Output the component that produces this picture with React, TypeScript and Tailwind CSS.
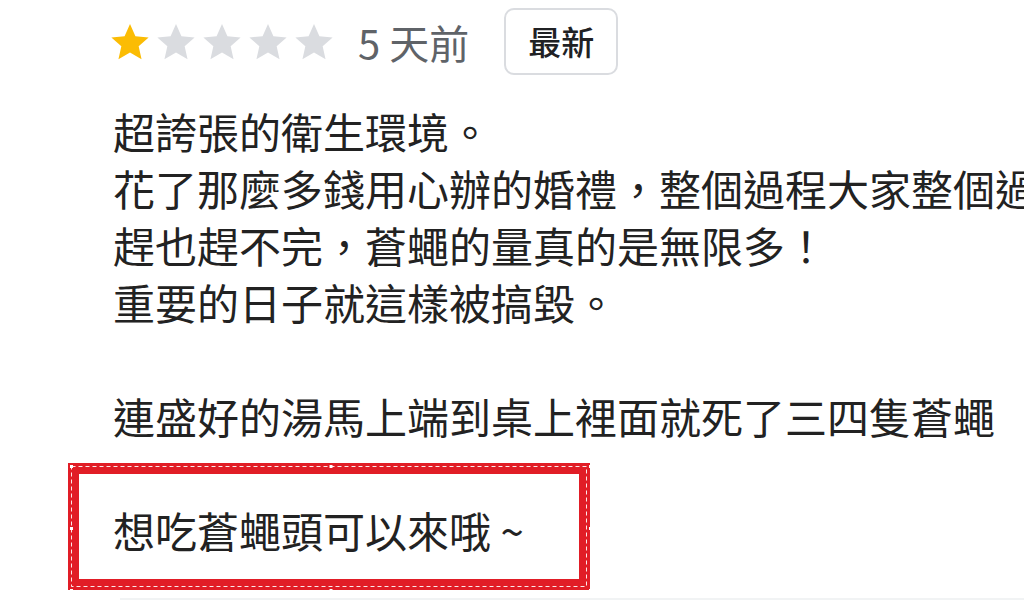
import React from "react";

const Star = ({ color }: { color: string }) => (
  <svg width="44" height="44" viewBox="0 0 24 24" className="block">
    <path
      d="M12 2.2l2.95 6.62 7.2.68-5.43 4.8 1.58 7.07L12 17.7l-6.3 3.67 1.58-7.07L1.85 9.5l7.2-.68z"
      fill={color}
    />
  </svg>
);

const lines = [
  "超誇張的衛生環境。",
  "花了那麼多錢用心辦的婚禮，整個過程大家整個過程都在趕蒼蠅，",
  "趕也趕不完，蒼蠅的量真的是無限多！",
  "重要的日子就這樣被搞毀。",
  "",
  "連盛好的湯馬上端到桌上裡面就死了三四隻蒼蠅",
  "",
  "想吃蒼蠅頭可以來哦 ~",
];

const Handles = () => {
  const pts: [number, number][] = [
    [1.5, 1.5], [261, 1.5], [520.5, 1.5],
    [1.5, 63.5], [520.5, 63.5],
    [1.5, 125.5], [261, 125.5], [520.5, 125.5],
  ];
  return (
    <svg width="522" height="127" className="absolute inset-0 -m-[11px]">
      <rect x="3.5" y="3.5" width="515" height="120" fill="none" stroke="#ffffff" strokeOpacity="0.9" strokeWidth="1" strokeDasharray="4 3" />
      {pts.map(([x, y], i) => (
        <rect key={i} x={x + 0.5} y={y + 0.5} width="3" height="3" fill="#ffffff" />
      ))}
    </svg>
  );
};

export default function App() {
  return (
    <div
      className="relative w-[1024px] h-[600px] overflow-hidden bg-white"
      style={{ fontFamily: '"Noto Sans CJK TC", "Noto Sans", sans-serif' }}
    >
      <div className="flex items-center pt-[8px] pl-[108px] h-[75px]">
        <div className="flex items-center gap-[2px]">
          <Star color="#fbbc04" />
          <Star color="#dadce0" />
          <Star color="#dadce0" />
          <Star color="#dadce0" />
          <Star color="#dadce0" />
        </div>
        <span className="ml-[22px] text-[40px] leading-none text-[#5f6368]">5 天前</span>
        <div className="ml-[35px] h-[67px] px-[22px] flex items-center border-2 border-[#dadce0] rounded-[10px] text-[33px] font-medium text-[#202124] leading-none">
          最新
        </div>
      </div>
      <div className="mt-[27px] pl-[113px] text-[42px] leading-[57px] text-[#222222] whitespace-nowrap">
        {lines.map((l, i) => (
          <div key={i} className="h-[57px]">
            {l}
          </div>
        ))}
      </div>
      <div className="mt-[40px] ml-[120px] h-[3px] bg-[#f1f3f4]" />
      <div className="absolute left-[68px] top-[463px] w-[522px] h-[127px] border-[11px] border-[#e11d26]">
        <Handles />
      </div>
    </div>
  );
}
